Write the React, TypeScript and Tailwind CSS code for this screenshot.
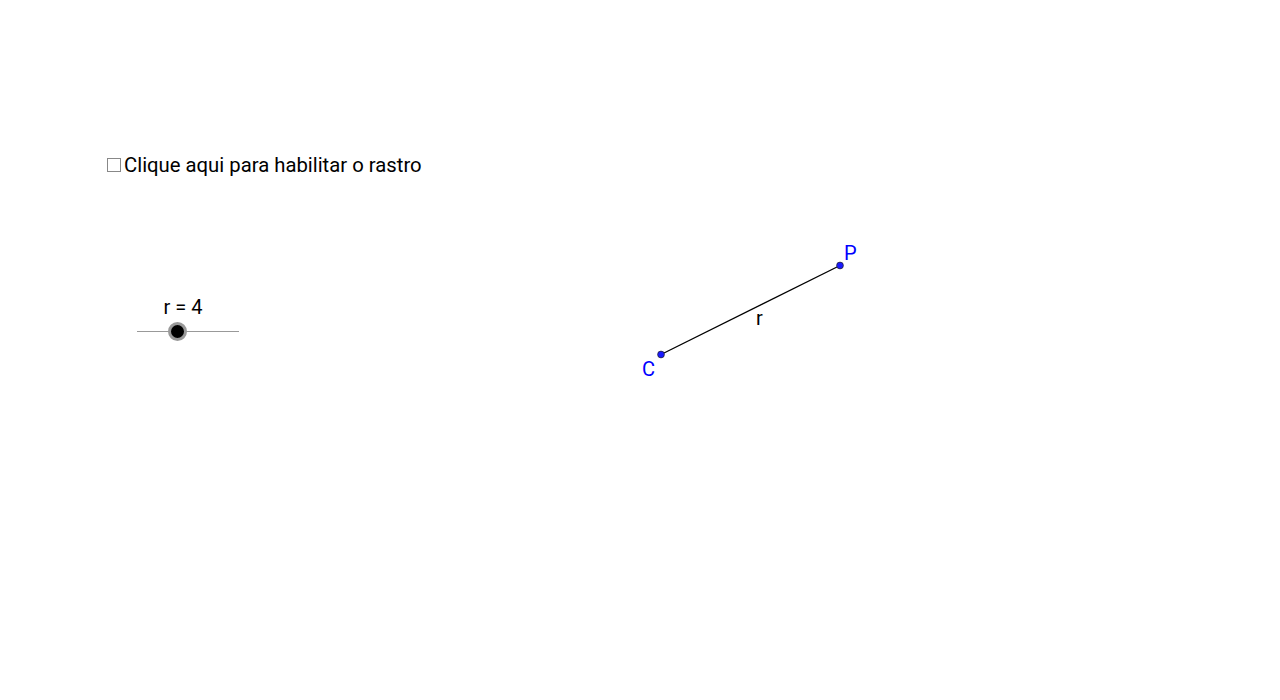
import React from "react"

const Checkbox = () => (
  <label className="absolute left-[107px] top-[151px] flex items-center gap-[3px] text-[20.3px] leading-7 text-black">
    <span className="block w-[14px] h-[14px] border-[1.5px] border-[#888] bg-white" />
    <span>Clique aqui para habilitar o rastro</span>
  </label>
)

const Slider = () => (
  <div className="absolute left-[137px] top-[293px] w-[102px]">
    <div className="text-center text-[20px] leading-7 text-black pr-[10px]">r = 4</div>
    <div className="relative mt-[10px] h-px bg-[#999]">
      <span className="absolute left-[31px] top-[-9px] w-[19px] h-[19px] rounded-full bg-black border-[3px] border-[#999]" />
    </div>
  </div>
)

const Construction = () => (
  <svg className="absolute left-0 top-0" width={1280} height={700}>
    <line x1={661} y1={354.5} x2={840} y2={265.5} stroke="#000" strokeWidth={1.3} />
    <circle cx={661} cy={354.5} r={3.4} fill="#1a1aff" stroke="#222" strokeWidth={0.7} />
    <circle cx={840} cy={265.5} r={3.4} fill="#1a1aff" stroke="#222" strokeWidth={0.7} />
    <text x={844} y={260} fill="#0000ff" fontSize={20} fontFamily="Roboto, sans-serif">P</text>
    <text x={642} y={376} fill="#0000ff" fontSize={20} fontFamily="Roboto, sans-serif">C</text>
    <text x={756} y={325} fill="#000" fontSize={20} fontFamily="Roboto, sans-serif">r</text>
  </svg>
)

export default function App() {
  return (
    <div className="relative w-[1280px] h-[700px] bg-white overflow-hidden font-['Roboto',sans-serif]">
      <Construction />
      <Checkbox />
      <Slider />
    </div>
  )
}
